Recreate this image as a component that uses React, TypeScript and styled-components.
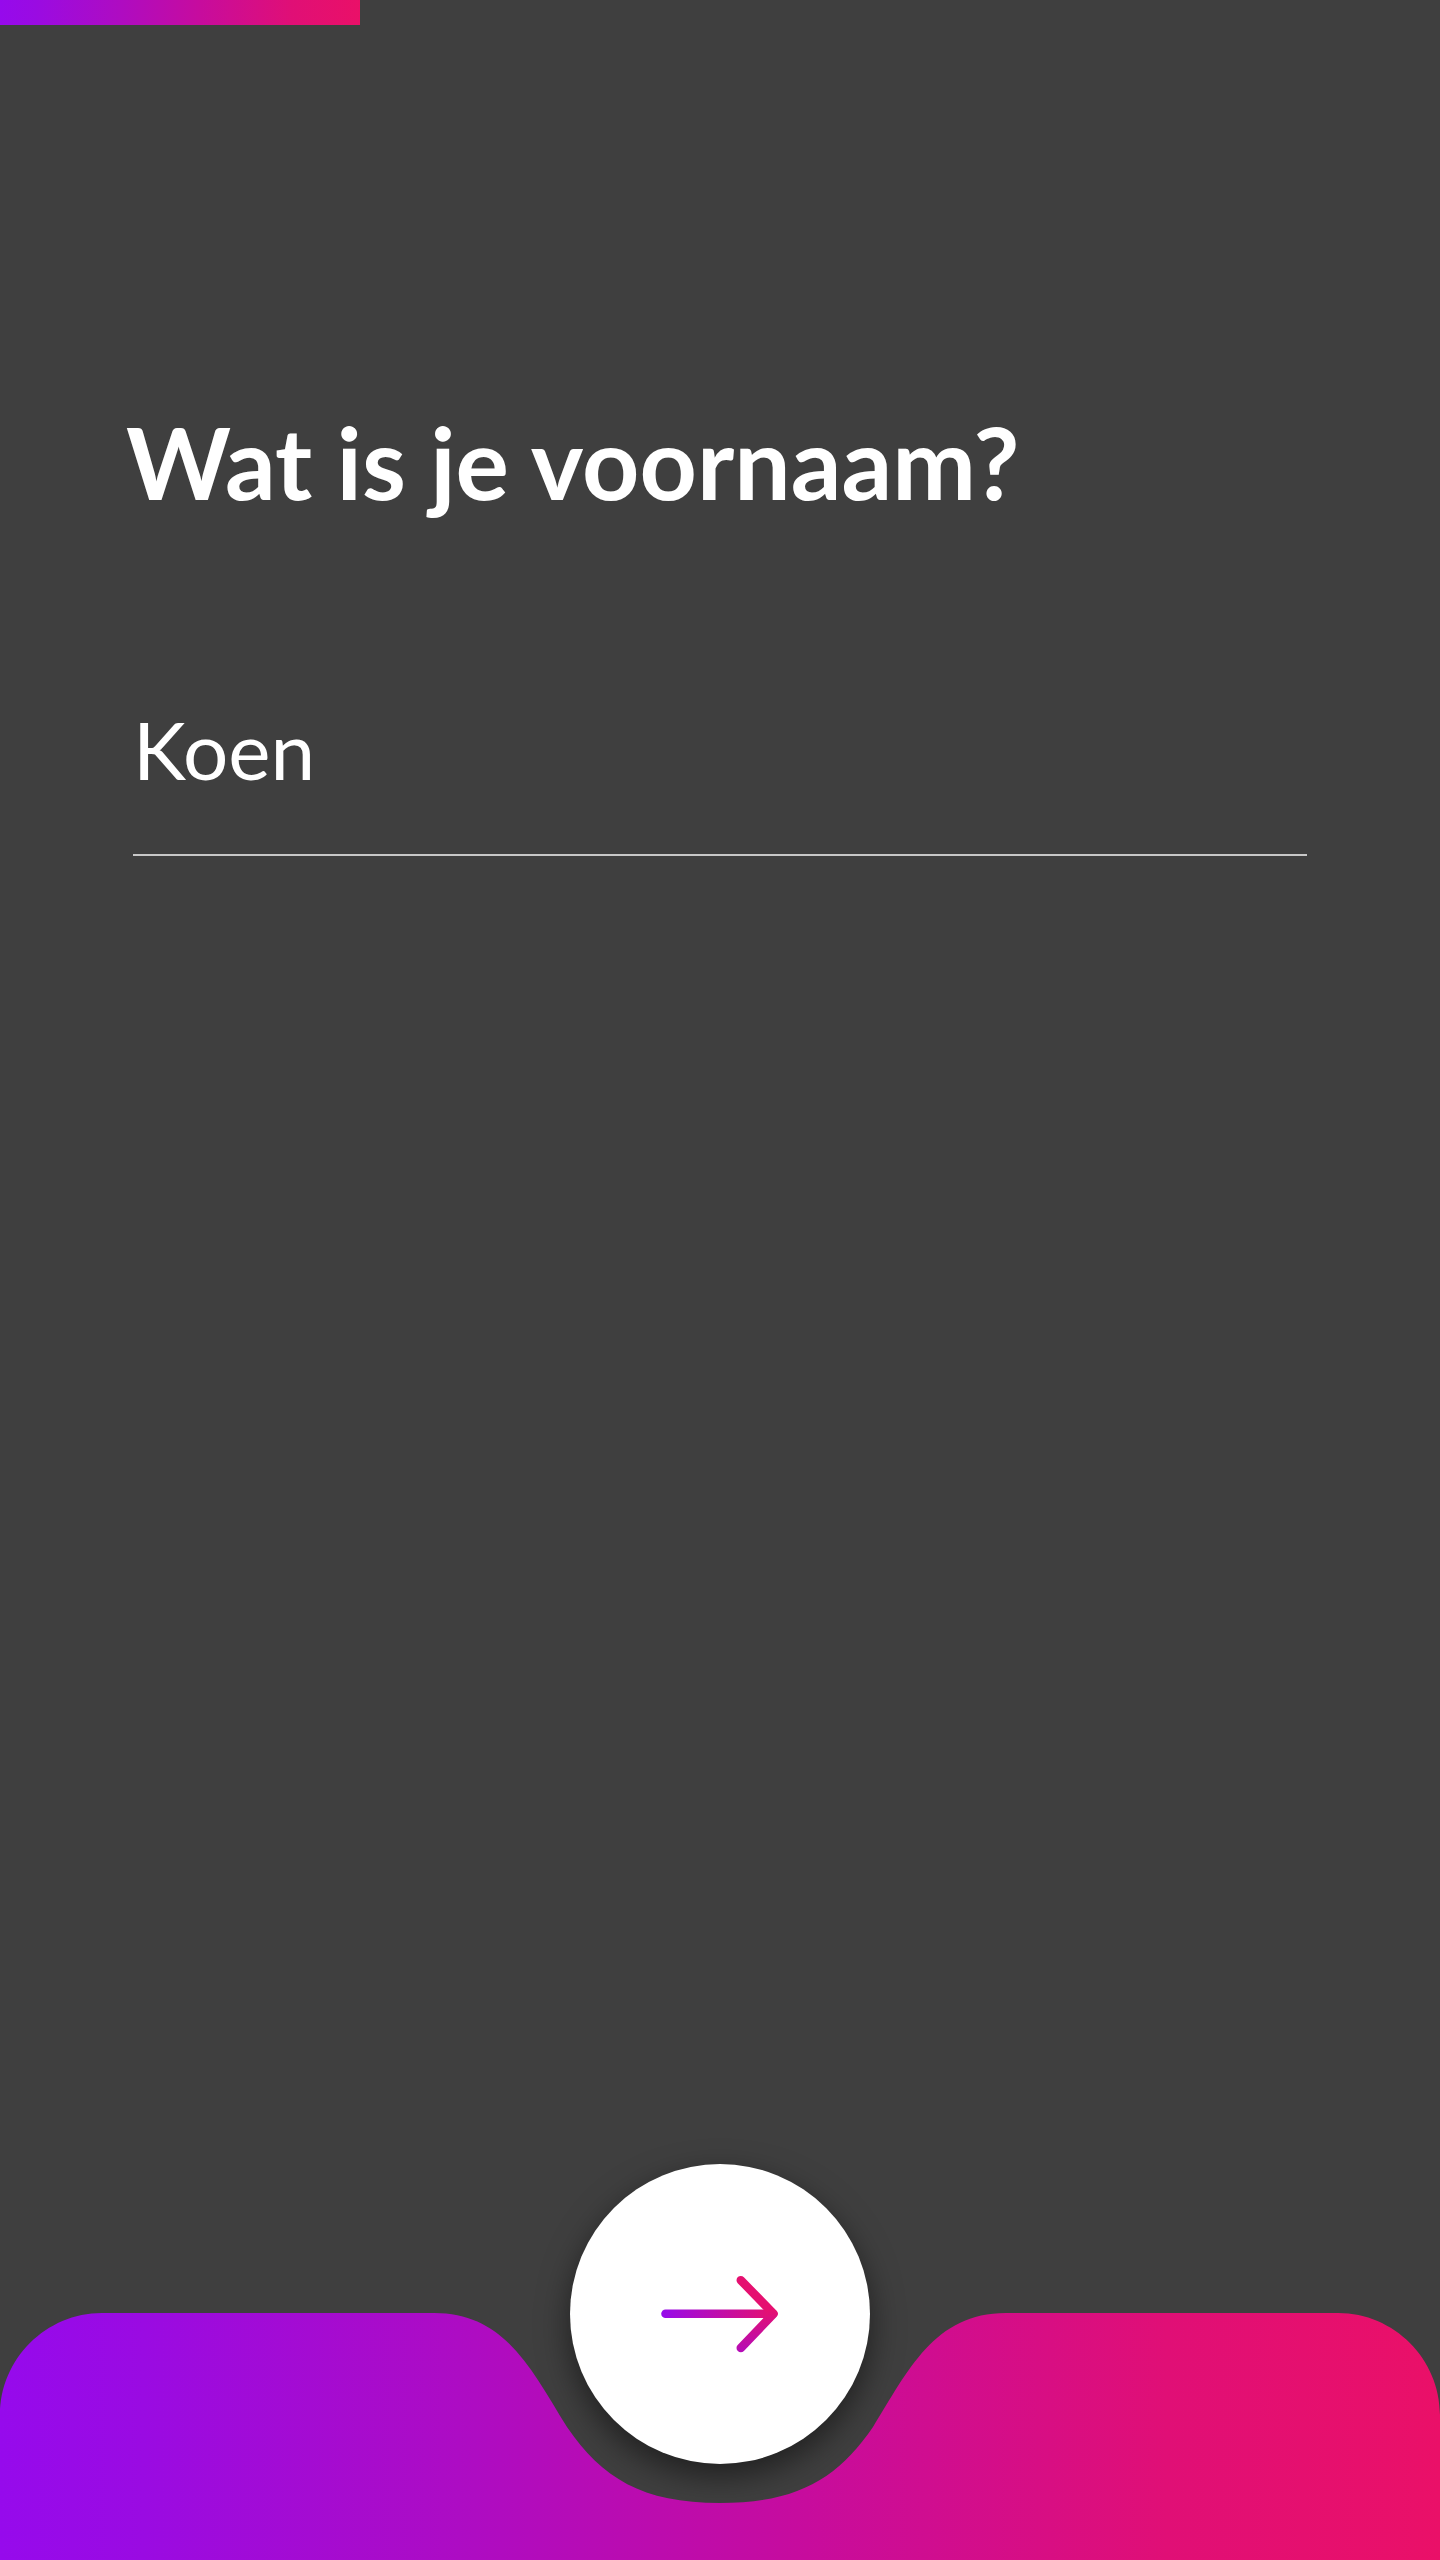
import React, { useState } from "react";
import styled, { createGlobalStyle } from "styled-components";

const colors = {
  background: "#3f3f3f",
  purple: "#960aec",
  pink: "#ea1068",
  line: "#c8c8c8",
};

const brandStops: [number, string][] = [
  [0, colors.purple],
  [10, "#9a0be2"],
  [33, "#ae0cc2"],
  [56, "#c70c9d"],
  [81, "#e00f76"],
  [100, colors.pink],
];

const brandGradient = `linear-gradient(90deg, ${brandStops
  .map(([offset, color]) => `${color} ${offset}%`)
  .join(", ")})`;

const GlobalStyle = createGlobalStyle`
  * {
    box-sizing: border-box;
  }
  body {
    margin: 0;
    background: ${colors.background};
    color: #fff;
    font-family: Lato, "Open Sans", sans-serif;
  }
`;

const Page = styled.form`
  display: flex;
  flex-direction: column;
  min-height: 100vh;
`;

const StepProgress = styled.progress`
  appearance: none;
  display: block;
  width: 100%;
  height: 25px;
  border: 0;
  background: transparent;

  &::-webkit-progress-bar {
    background: transparent;
  }
  &::-webkit-progress-value {
    background: ${brandGradient};
  }
`;

const Question = styled.main`
  flex: 1;
  display: flex;
  flex-direction: column;
  gap: 180px;
  padding: 376px 126px 128px;
`;

const Title = styled.h1`
  margin: 0;
  font-size: 100px;
  font-weight: 700;
  line-height: 120px;
`;

const NameField = styled.input`
  margin: 0 7px;
  padding: 0 0 57px;
  border: 0;
  border-bottom: 2px solid ${colors.line};
  border-radius: 0;
  outline: 0;
  background: transparent;
  color: inherit;
  font-family: inherit;
  font-size: 80px;
  line-height: 96px;
  height: 155px;
`;

const Footer = styled.footer`
  display: grid;
  justify-items: center;

  & > * {
    grid-area: 1 / 1;
  }
`;

const NextButton = styled.button`
  display: grid;
  place-items: center;
  width: 300px;
  height: 300px;
  padding: 0;
  border: 0;
  border-radius: 50%;
  background: #fff;
  box-shadow: 0 12px 32px rgba(0, 0, 0, 0.5);
  cursor: pointer;
`;

const Wave = styled.svg`
  display: block;
  width: 100%;
  margin-top: 149px;
  pointer-events: none;
`;

function ArrowIcon() {
  return (
    <svg width="120" height="80" viewBox="0 0 120 80" fill="none" strokeWidth="8.6" strokeLinecap="round" strokeLinejoin="round" aria-hidden="true">
      <defs>
        <linearGradient id="shaft" gradientUnits="userSpaceOnUse" x1="1" y1="0" x2="112" y2="0">
          <stop offset="0" stopColor={colors.purple} />
          <stop offset="0.12" stopColor="#a00bdc" />
          <stop offset="1" stopColor="#e51070" />
        </linearGradient>
        <linearGradient id="head" gradientUnits="userSpaceOnUse" x1="0" y1="78" x2="0" y2="36">
          <stop offset="0" stopColor="#b40cb8" />
          <stop offset="1" stopColor="#e51070" />
        </linearGradient>
      </defs>
      <path d="M5.5 39.8H113" stroke="url(#shaft)" />
      <path d="M80.8 6.2 L113.5 39.8 L80.8 74" stroke="url(#head)" />
    </svg>
  );
}

export default function App() {
  const [name, setName] = useState("Koen");

  return (
    <>
      <GlobalStyle />
      <Page onSubmit={(event) => event.preventDefault()}>
        <StepProgress value={1} max={4} aria-label="Voortgang" />
        <Question>
          <Title>
            <label htmlFor="voornaam">Wat is je voornaam?</label>
          </Title>
          <NameField
            id="voornaam"
            type="text"
            autoComplete="off"
            spellCheck={false}
            value={name}
            onChange={(event) => setName(event.target.value)}
          />
        </Question>
        <Footer>
          <NextButton type="submit" aria-label="Volgende">
            <ArrowIcon />
          </NextButton>
          <Wave viewBox="0 0 1440 247" aria-hidden="true">
            <defs>
              <linearGradient id="wave" x1="0" y1="0" x2="1" y2="0">
                {brandStops.map(([offset, color]) => (
                  <stop key={offset} offset={`${offset}%`} stopColor={color} />
                ))}
              </linearGradient>
            </defs>
            <path
              fill="url(#wave)"
              d="M0 247V102C0 46 46 0 102 0H434C506 0 532 58 567 114C602 165 642 190 720 190C798 190 838 165 873 114C908 58 934 0 1006 0H1338C1394 0 1440 46 1440 102V247Z"
            />
          </Wave>
        </Footer>
      </Page>
    </>
  );
}
